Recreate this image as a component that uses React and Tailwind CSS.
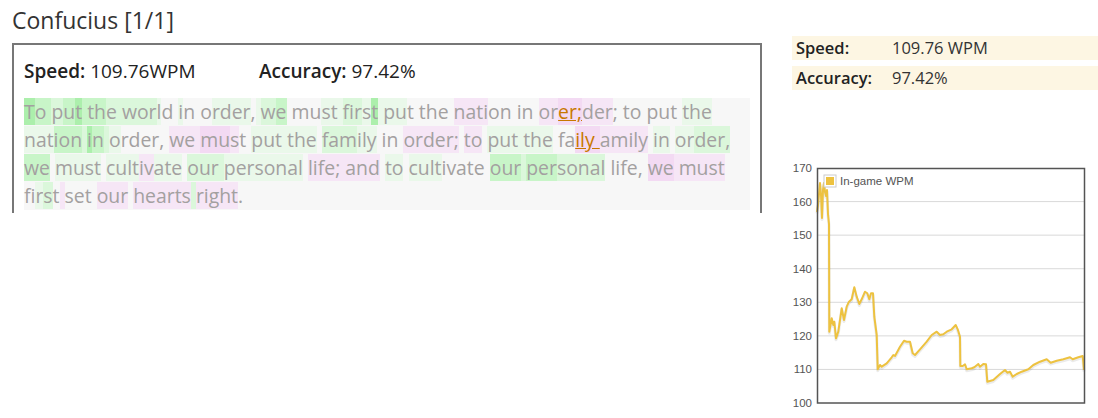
import React from 'react'

// background shades used for the per-character timing highlights
const SHADE = {
  '': '',
  g0: 'bg-[#eaf8ea]',
  g1: 'bg-[#dbf7db]',
  g2: 'bg-[#c8f5c8]',
  g3: 'bg-[#acefac]',
  p1: 'bg-[#f6e6f6]',
  p2: 'bg-[#f3daf3]',
}

const LINES = [
  [['T', 'g3'], ['o', 'g2'], [' ', 'g2'], ['p', 'g1'], ['u', 'g2'], ['t', 'g3'], [' ', 'g2'], ['th', 'g2'], ['e', 'g1'], [' ', 'g1'], ['wor', 'g1'], ['l', 'g0'], ['d', ''], [' ', ''], ['i', 'g0'], ['n', ''], [' ', ''], ['o', ''], ['rder', 'g0'], [',', ''], [' ', 'g0'], ['w', 'g1'], ['e', 'g2'], [' ', ''], ['mu', ''], ['st', 'g0'], [' ', 'g0'], ['fir', 'g1'], ['s', 'g0'], ['t', 'g3'], [' ', 'g0'], ['pu', 'g0'], ['t the ', ''], ['nati', 'p1'], ['on in ', ''], ['or', 'p1'], ['er;', 'typo'], ['der', 'p1'], ['; to put ', ''], ['the', 'g0']],
  [['nat', 'g0'], ['ion', 'g2'], [' ', 'g1'], ['i', 'g3'], ['n', 'g2'], [' ', 'g1'], ['o', 'g0'], ['rder, ', ''], ['we ', 'p1'], ['mu', 'p2'], ['s', 'p1'], ['t ', ''], ['put the', 'g0'], [' ', ''], ['fam', 'g1'], ['ily', 'g0'], [' in ', ''], ['order;', 'p1'], [' ', ''], ['to', 'p1'], [' ', ''], ['put the', 'g0'], [' fa', ''], ['ily ', 'typo'], ['amily', 'p1'], [' ', ''], ['in', 'g0'], [' ', ''], ['or', 'g0'], ['der,', 'g1']],
  [['we', 'g2'], [' ', ''], ['must', 'g0'], [' ', ''], ['cult', 'g0'], ['iv', 'p1'], ['ate', 'g0'], [' ', ''], ['our', 'g1'], [' ', 'g1'], ['personal', 'g0'], [' ', ''], ['life;', 'p1'], [' and', 'p1'], [' ', ''], ['to', 'g0'], [' ', ''], ['cult', 'g0'], ['ivate ', ''], ['our', 'g2'], [' ', 'g1'], ['per', 'g2'], ['sonal', 'g1'], [' life, ', ''], ['we', 'p2'], [' ', 'p1'], ['must', 'p1']],
  [['f', ''], ['ir', 'g0'], ['s', 'g1'], ['t', ''], [' ', 'p1'], ['set ', ''], ['our', 'p1'], [' ', ''], ['hearts', 'p1'], [' ', 'g1'], ['right', 'p1'], ['.', '']],
]

// in-game WPM samples, already in page pixel coordinates
const WPM = [
  [817, 212], [818, 205], [820, 183], [821, 195], [822, 218], [823, 190], [824, 183], [825, 192], [826, 196], [827, 190], [828, 214], [829, 224], [829.3, 331.7], [831.7, 318.3], [833.3, 325], [834.3, 321.7], [836, 338.3], [838.3, 331.7], [841.7, 308.3], [844, 320], [846.7, 306.7], [849, 301.7], [851.7, 299.3], [854.3, 287.3], [856.7, 296.7], [859.3, 304], [861.7, 299.3], [865, 291.7], [867.3, 293.3], [869.3, 299.3], [871, 293.3], [873, 293.3], [874.3, 316.7], [876.7, 335], [877.7, 369.3], [880, 365], [881.7, 366.7], [886.7, 363.3], [891.7, 357.3], [893.3, 355], [895, 356], [900, 346.7], [904, 340.7], [906.7, 341.7], [910, 341.7], [912.7, 353.3], [915, 355], [920, 349.3], [926.7, 341.7], [931.7, 335], [936.7, 331.7], [940, 335], [943.3, 334.3], [946.7, 331.7], [951.7, 329.3], [955.7, 325], [957.7, 329.3], [960, 336.7], [960.3, 366], [962.7, 366], [965, 364.3], [966.7, 369.3], [971.7, 368.3], [974.3, 367.3], [978.3, 364], [980, 366.7], [983.3, 364], [986, 364.3], [987.3, 381.7], [993.3, 380], [1000, 374], [1005, 370], [1007.3, 372.7], [1010, 371.7], [1012.7, 376.7], [1016.7, 374], [1021.7, 371.7], [1028.3, 369.3], [1033.3, 365], [1040, 361.7], [1046.7, 359.3], [1050.7, 362.7], [1056.7, 360.7], [1063.3, 359.3], [1070, 357.3], [1072.7, 359.3], [1078.3, 357.3], [1082.7, 356], [1084, 370],
]

function WpmChart() {
  const pts = WPM.map(([x, y]) => `${x},${y}`).join(' ')
  const ticks = [170, 160, 150, 140, 130, 120, 110, 100]
  const yOf = (v) => 403 - (v - 100) * 3.357
  return (
    <svg width="313" height="258" viewBox="785 160 313 258" className="block">
      {ticks.slice(1, -1).map((t) => (
        <line key={t} x1="817" x2="1084" y1={yOf(t)} y2={yOf(t)} stroke="#d9d9d9" strokeWidth="1" />
      ))}
      {ticks.map((t) => (
        <text key={t} x="812" y={yOf(t) + 4} textAnchor="end" fontSize="11.5" fill="#545454" fontFamily="'Liberation Sans', sans-serif">
          {t}
        </text>
      ))}
      <polyline points={pts} fill="none" stroke="#000" strokeOpacity="0.08" strokeWidth="3" transform="translate(0,1.5)" strokeLinejoin="round" />
      <polyline points={pts} fill="none" stroke="#edc240" strokeWidth="2" strokeLinejoin="round" />
      <rect x="817.5" y="168.5" width="267" height="234.5" fill="none" stroke="#545454" strokeWidth="1.5" />
      <rect x="824" y="175" width="12" height="12" fill="#fff" stroke="#ccc" strokeWidth="1" />
      <rect x="826" y="177" width="8" height="8" fill="#edc240" />
      <text x="840" y="185" fontSize="11.5" fill="#545454" fontFamily="'Liberation Sans', sans-serif">
        In-game WPM
      </text>
    </svg>
  )
}

export default function App() {
  return (
    <div className="flex bg-white pl-[12px] text-[#333] font-['Open_Sans',sans-serif]">
      <div className="w-[750px] shrink-0">
        <div className="h-[43px] pt-[5px] text-[23px] leading-[30px] text-[#333]">Confucius [1/1]</div>
        <div className="border-2 border-b-0 border-[#777] px-[10px] pb-[3px]">
          <div className="flex h-[53px] items-center text-[19px] text-[#222]">
            <div className="w-[235px]">
              <b className="font-semibold">Speed:</b> 109.76WPM
            </div>
            <div>
              <b className="font-semibold">Accuracy:</b> 97.42%
            </div>
          </div>
          <div className="bg-[#f7f7f7] text-[19.4px] leading-[28px] text-[#a3a0a0]">
            {LINES.map((line, i) => (
              <div key={i} className="whitespace-pre">
                {line.map(([t, k], j) =>
                  k === 'typo' ? (
                    <span key={j} className="bg-[#f3daf3] text-[#c87800] underline">{t}</span>
                  ) : (
                    <span key={j} className={SHADE[k]}>{t}</span>
                  ),
                )}
              </div>
            ))}
          </div>
        </div>
      </div>
      <div className="ml-[30px] flex-1">
        <div className="mt-[36px] flex flex-col gap-[6px] text-[16.5px]">
          <div className="flex h-[24px] items-center bg-[#fdf6e3] px-[4px]">
            <span className="w-[96px] font-semibold text-[#222]">Speed:</span>
            <span>109.76 WPM</span>
          </div>
          <div className="flex h-[24px] items-center bg-[#fdf6e3] px-[4px]">
            <span className="w-[96px] font-semibold text-[#222]">Accuracy:</span>
            <span>97.42%</span>
          </div>
        </div>
        <div className="ml-[-7px] mt-[70px]">
          <WpmChart />
        </div>
      </div>
    </div>
  )
}
